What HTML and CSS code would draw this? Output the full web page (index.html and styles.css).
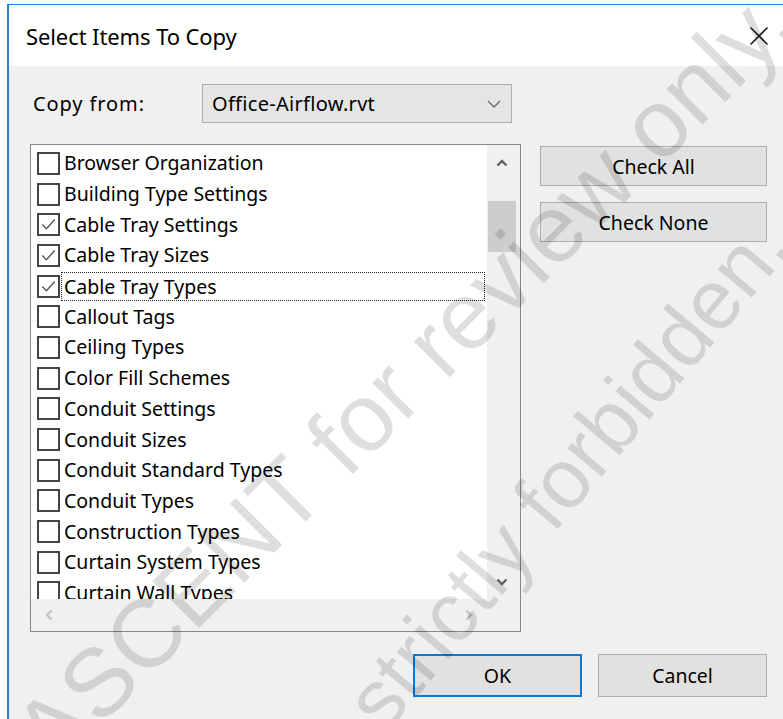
FILE: index.html
```html
<!DOCTYPE html>
<html lang="en">
<head>
<meta charset="utf-8">
<title>Select Items To Copy</title>
<link rel="stylesheet" href="styles.css">
</head>
<body>
<div class="window">
  <div class="titlebar">
    <span class="title">Select Items To Copy</span>
    <svg class="close" width="20" height="20" viewBox="0 0 20 20"><path d="M1.5 1.5L18.5 18.5M18.5 1.5L1.5 18.5"/></svg>
  </div>
  <div class="client">
    <div class="source-row">
      <span class="source-label">Copy from:</span>
      <div class="combo">
        <span class="combo-value">Office-Airflow.rvt</span>
        <svg class="combo-arrow" width="14" height="8" viewBox="0 0 14 8"><path d="M1 1L7 7L13 1"/></svg>
      </div>
    </div>

    <div class="main-row">
      <div class="listbox">
        <div class="list-view">
          <ul class="items">
            <li class="item"><span class="box"></span><span class="label">Browser Organization</span></li>
            <li class="item"><span class="box"></span><span class="label">Building Type Settings</span></li>
            <li class="item"><span class="box checked"><svg viewBox="0 0 23 23"><path d="M4 11.5L9 16.5L19 5.5"/></svg></span><span class="label">Cable Tray Settings</span></li>
            <li class="item"><span class="box checked"><svg viewBox="0 0 23 23"><path d="M4 11.5L9 16.5L19 5.5"/></svg></span><span class="label">Cable Tray Sizes</span></li>
            <li class="item"><span class="box checked"><svg viewBox="0 0 23 23"><path d="M4 11.5L9 16.5L19 5.5"/></svg></span><span class="label focused">Cable Tray Types</span></li>
            <li class="item"><span class="box"></span><span class="label">Callout Tags</span></li>
            <li class="item"><span class="box"></span><span class="label">Ceiling Types</span></li>
            <li class="item"><span class="box"></span><span class="label">Color Fill Schemes</span></li>
            <li class="item"><span class="box"></span><span class="label">Conduit Settings</span></li>
            <li class="item"><span class="box"></span><span class="label">Conduit Sizes</span></li>
            <li class="item"><span class="box"></span><span class="label">Conduit Standard Types</span></li>
            <li class="item"><span class="box"></span><span class="label">Conduit Types</span></li>
            <li class="item"><span class="box"></span><span class="label">Construction Types</span></li>
            <li class="item"><span class="box"></span><span class="label">Curtain System Types</span></li>
            <li class="item"><span class="box"></span><span class="label">Curtain Wall Types</span></li>
          </ul>
        </div>
        <div class="vscroll">
          <div class="sb-btn"><svg width="12" height="8" viewBox="0 0 12 8"><path d="M1.5 6.5L6 2L10.5 6.5"/></svg></div>
          <div class="thumb"></div>
          <div class="sb-btn sb-end"><svg width="12" height="8" viewBox="0 0 12 8"><path d="M1.5 1.5L6 6L10.5 1.5"/></svg></div>
        </div>
        <div class="hscroll">
          <div class="sb-btn-h"><svg width="8" height="12" viewBox="0 0 8 12"><path d="M6.5 1.5L2 6L6.5 10.5"/></svg></div>
          <div class="sb-btn-h"><svg width="8" height="12" viewBox="0 0 8 12"><path d="M1.5 1.5L6 6L1.5 10.5"/></svg></div>
        </div>
        <div class="corner"></div>
      </div>

      <div class="side-buttons">
        <button class="btn side">Check All</button>
        <button class="btn side">Check None</button>
      </div>
    </div>

    <div class="footer">
      <button class="btn footer-btn default">OK</button>
      <button class="btn footer-btn">Cancel</button>
    </div>
  </div>
</div>

<div class="watermark" aria-hidden="true">
  <span class="mark mark-one">ASCENT for review only.</span>
  <span class="mark mark-two">strictly forbidden.</span>
</div>
</body>
</html>
```

FILE: styles.css
```css
html, body {
  margin: 0;
  padding: 0;
  width: 783px;
  height: 719px;
  overflow: hidden;
  background: #ffffff;
}

body {
  position: relative;
  font-family: "Noto Sans", "Open Sans", sans-serif;
  color: #000;
}

/* dialog frame */
.window {
  margin: 4px 0 0 7px;
  width: 790px;
  height: 730px;
  border-top: 1px solid #2a7fd4;
  border-left: 2px solid #2a7fd4;
  display: flex;
  flex-direction: column;
}

.titlebar {
  height: 61px;
  flex: none;
  background: #fff;
  display: flex;
  align-items: center;
  padding-left: 17px;
  position: relative;
}

.title {
  font-size: 22px;
  letter-spacing: -0.1px;
}

.close {
  position: absolute;
  left: 740px;
  top: 21px;
}
.close path {
  stroke: #1e1e1e;
  stroke-width: 1.6;
  fill: none;
}

.client {
  flex: 1;
  background: #f0f0f0;
  padding: 18px 0 0 21px;
  font-size: 19.5px;
}

/* "Copy from" row */
.source-row {
  display: flex;
  align-items: center;
  height: 39px;
  font-size: 20px;
}

.source-label {
  width: 169px;
  padding-left: 3px;
  letter-spacing: 0.9px;
}

.combo {
  width: 310px;
  height: 39px;
  box-sizing: border-box;
  border: 1px solid #adadad;
  background: #e5e5e5;
  display: flex;
  align-items: center;
  padding-left: 9px;
  position: relative;
  letter-spacing: 0.3px;
}

.combo-arrow {
  position: absolute;
  right: 10px;
  top: 15px;
}
.combo-arrow path {
  stroke: #666;
  stroke-width: 1.3;
  fill: none;
}

/* list + side buttons */
.main-row {
  display: flex;
  margin-top: 21px;
}

.listbox {
  width: 491px;
  height: 488px;
  box-sizing: border-box;
  border: 1px solid #828790;
  display: grid;
  grid-template-columns: 456px 33px;
  grid-template-rows: 454px 32px;
  background: #f0f0f0;
}

.list-view {
  background: #fff;
  overflow: hidden;
}

.items {
  list-style: none;
  margin: 0;
  padding: 3px 0 0 6px;
}

.item {
  height: 30.7px;
  display: flex;
  align-items: center;
}

.box {
  width: 23px;
  height: 23px;
  box-sizing: border-box;
  border: 2px solid #444;
  background: #fff;
  flex: none;
  display: flex;
}

.box svg {
  width: 19px;
  height: 19px;
}
.box svg path {
  stroke: #555;
  stroke-width: 1.7;
  fill: none;
}

.label {
  margin-left: 1px;
  padding: 0 1px 0 2px;
  border: 1px dotted transparent;
  line-height: 24px;
  white-space: nowrap;
}

.label.focused {
  flex: 1;
  margin-right: 2px;
  border-color: #222;
  line-height: 27px;
}

/* scrollbars */
.vscroll {
  display: flex;
  flex-direction: column;
}

.sb-btn {
  height: 35px;
  display: flex;
  align-items: center;
  justify-content: center;
  padding-right: 4px;
  flex: none;
}
.sb-btn svg path {
  stroke: #606060;
  stroke-width: 2.4;
  fill: none;
}
.sb-end {
  margin-top: auto;
}

.thumb {
  margin: 21px 0 0 1px;
  width: 28px;
  height: 51px;
  background: #cdcdcd;
}

.hscroll {
  display: flex;
  justify-content: space-between;
}

.sb-btn-h {
  width: 36px;
  display: flex;
  align-items: center;
  justify-content: center;
}
.sb-btn-h svg path {
  stroke: #c4c4c4;
  stroke-width: 2.4;
  fill: none;
}

.corner {
  background: #f0f0f0;
}

.side-buttons {
  display: flex;
  flex-direction: column;
  gap: 16px;
  margin-left: 19px;
  padding-top: 2px;
}

.btn {
  font-family: inherit;
  font-size: 19.5px;
  color: #000;
  background: #e1e1e1;
  border: 1px solid #adadad;
  margin: 0;
  padding: 0;
  box-sizing: border-box;
}

.btn.side {
  width: 227px;
  height: 40px;
}

.footer {
  display: flex;
  gap: 16px;
  margin-top: 22px;
  padding-left: 383px;
}

.footer-btn {
  width: 169px;
  height: 43px;
}

.footer-btn.default {
  border: 2px solid #0a78d4;
}

/* review watermark laid over the dialog */
.watermark {
  position: absolute;
  inset: 0;
  pointer-events: none;
  overflow: hidden;
}

.mark {
  position: absolute;
  font-family: "Liberation Sans", Arial, sans-serif;
  line-height: 1;
  white-space: nowrap;
  color: rgba(0, 0, 0, 0.13);
}

.mark-one {
  font-size: 96px;
  transform-origin: 0 81px;
  transform: rotate(-45deg);
  left: 54px;
  top: 692px;
}

.mark-two {
  font-size: 84px;
  transform-origin: 0 71px;
  transform: rotate(-50deg);
  left: 385px;
  top: 664px;
}
```
